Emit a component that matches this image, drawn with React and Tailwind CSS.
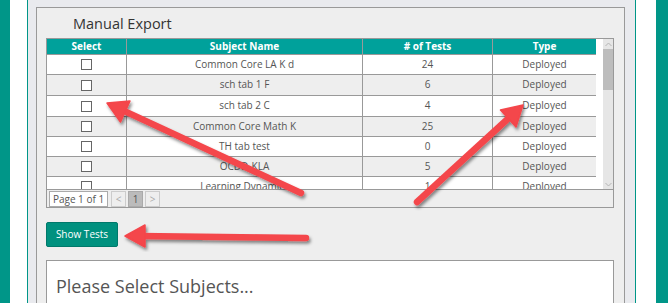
import React from "react";

const rows = [
  { name: "Common Core LA K d", tests: "24", type: "Deployed", h: "h-[20px]", bg: "bg-white" },
  { name: "sch tab 1 F", tests: "6", type: "Deployed", h: "h-[21px]", bg: "bg-[#eeeeee]" },
  { name: "sch tab 2 C", tests: "4", type: "Deployed", h: "h-[21px]", bg: "bg-white" },
  { name: "Common Core Math K", tests: "25", type: "Deployed", h: "h-[20px]", bg: "bg-[#eeeeee]" },
  { name: "TH tab test", tests: "0", type: "Deployed", h: "h-[20px]", bg: "bg-white" },
  { name: "OCDD-KLA", tests: "5", type: "Deployed", h: "h-[20px]", bg: "bg-[#eeeeee]" },
  { name: "Learning Dynamics", tests: "1", type: "Deployed", h: "h-[20px]", bg: "bg-white" },
];

const cols = "grid grid-cols-[80px_236px_130px_103px]";

const Arrow = ({ tail, tip, corners }) => (
  <g filter="url(#shadow)">
    <line x1={tail[0]} y1={tail[1]} x2={(tip[0] + corners[0][0] + corners[1][0]) / 3} y2={(tip[1] + corners[0][1] + corners[1][1]) / 3} stroke="#f4464b" strokeWidth="6.5" strokeLinecap="round" />
    <polygon points={`${tip[0]},${tip[1]} ${corners[0][0]},${corners[0][1]} ${corners[1][0]},${corners[1][1]}`} fill="#f4464b" strokeLinejoin="round" stroke="#f4464b" strokeWidth="1.5" />
  </g>
);

const App = () => {
  return (
    <div className="relative flex h-[303px] w-[668px] overflow-hidden" style={{ fontFamily: "'Open Sans', 'Noto Sans', sans-serif" }}>
      <div className="w-[10px] bg-[#009688]" />
      <div className="w-[17px] bg-white" />
      <div className="w-[609px] border-x border-[#009688] bg-[#e9eaee] pl-[8px] pt-[7px]">
        <div className="h-[320px] w-[589px] border border-[#999999] bg-[#eeeeee] px-[9px]">
          <h2 className="h-[30px] pl-[27px] pt-[6px] text-[14.5px] leading-[20px] text-[#333333]">Manual Export</h2>

          <div className="w-[568px] border border-[#999999] bg-white">
            <div className="flex h-[150px]">
              <div className="w-[549px] overflow-hidden">
                <div className={`${cols} h-[16px] border-b border-[#999999] bg-[#00a19b] text-[10px] font-bold leading-[15px] text-white`}>
                  <div className="border-r border-[#999999] text-center">Select</div>
                  <div className="border-r border-[#999999] text-center">Subject Name</div>
                  <div className="border-r border-[#999999] text-center"># of Tests</div>
                  <div className="text-center">Type</div>
                </div>
                {rows.map((r) => (
                  <div key={r.name} className={`${cols} ${r.h} ${r.bg} border-b border-[#999999] text-[10px] leading-[19px] text-[#555555]`}>
                    <div className="flex items-center justify-center border-r border-[#999999]">
                      <div className="h-[11px] w-[11px] border border-[#666666] bg-white" />
                    </div>
                    <div className="border-r border-[#999999] text-center">{r.name}</div>
                    <div className="border-r border-[#999999] text-center">{r.tests}</div>
                    <div className="text-center">{r.type}</div>
                  </div>
                ))}
              </div>
              <div className="flex w-[17px] justify-end bg-white">
                <div className="flex w-[10px] flex-col bg-[#e6e6e6]">
                  <div className="flex h-[10px] items-center justify-center">
                    <svg width="7" height="5" viewBox="0 0 7 5"><path d="M0.5 4 L3.5 1 L6.5 4" fill="none" stroke="#b5b5b5" strokeWidth="1" /></svg>
                  </div>
                  <div className="h-[41px] bg-[#bdbdbd]" />
                  <div className="flex-1" />
                  <div className="flex h-[10px] items-center justify-center">
                    <svg width="7" height="5" viewBox="0 0 7 5"><path d="M0.5 1 L3.5 4 L6.5 1" fill="none" stroke="#b5b5b5" strokeWidth="1" /></svg>
                  </div>
                </div>
              </div>
            </div>
            <div className="flex h-[18px] items-start gap-[2px] border-t border-[#999999] bg-[#eeeeee] pl-[2px] pt-[1px] text-[10px] leading-[14px] text-[#555555]">
              <div className="h-[16px] w-[59px] border border-[#aaaaaa] bg-white text-center">Page 1 of 1</div>
              <div className="ml-[1px] h-[16px] w-[15px] border border-[#cccccc] text-center text-[#aaaaaa]">&lt;</div>
              <div className="h-[16px] w-[15px] border border-[#aaaaaa] bg-[#bbbbbb] text-center">1</div>
              <div className="h-[16px] w-[15px] border border-[#cccccc] text-center text-[#aaaaaa]">&gt;</div>
            </div>
          </div>

          <button className="mt-[14px] h-[25px] w-[72px] rounded-[2px] border border-[#00796b] bg-[#00917f] text-[10px] text-white">Show Tests</button>

          <div className="mt-[13px] h-[80px] w-[568px] border border-[#999999] bg-white pl-[9px] pt-[11px] text-[18px] leading-[28px] text-[#555555]">
            Please Select Subjects...
          </div>
        </div>
      </div>
      <div className="w-[20px] bg-white" />
      <div className="w-[12px] bg-[#009688]" />

      <svg className="pointer-events-none absolute left-0 top-0" width="668" height="303" viewBox="0 0 668 303">
        <defs>
          <filter id="shadow" x="-20%" y="-20%" width="140%" height="140%">
            <feDropShadow dx="1.5" dy="2.5" stdDeviation="1.8" floodColor="#000000" floodOpacity="0.45" />
          </filter>
        </defs>
        <Arrow tail={[301, 193]} tip={[107, 103]} corners={[[130, 101], [120.5, 122]]} />
        <Arrow tail={[417, 202]} tip={[523, 105]} corners={[[516, 127], [500.5, 110]]} />
        <Arrow tail={[306, 238]} tip={[125, 236]} corners={[[145, 225], [145, 247]]} />
      </svg>
    </div>
  );
};

export default App;
